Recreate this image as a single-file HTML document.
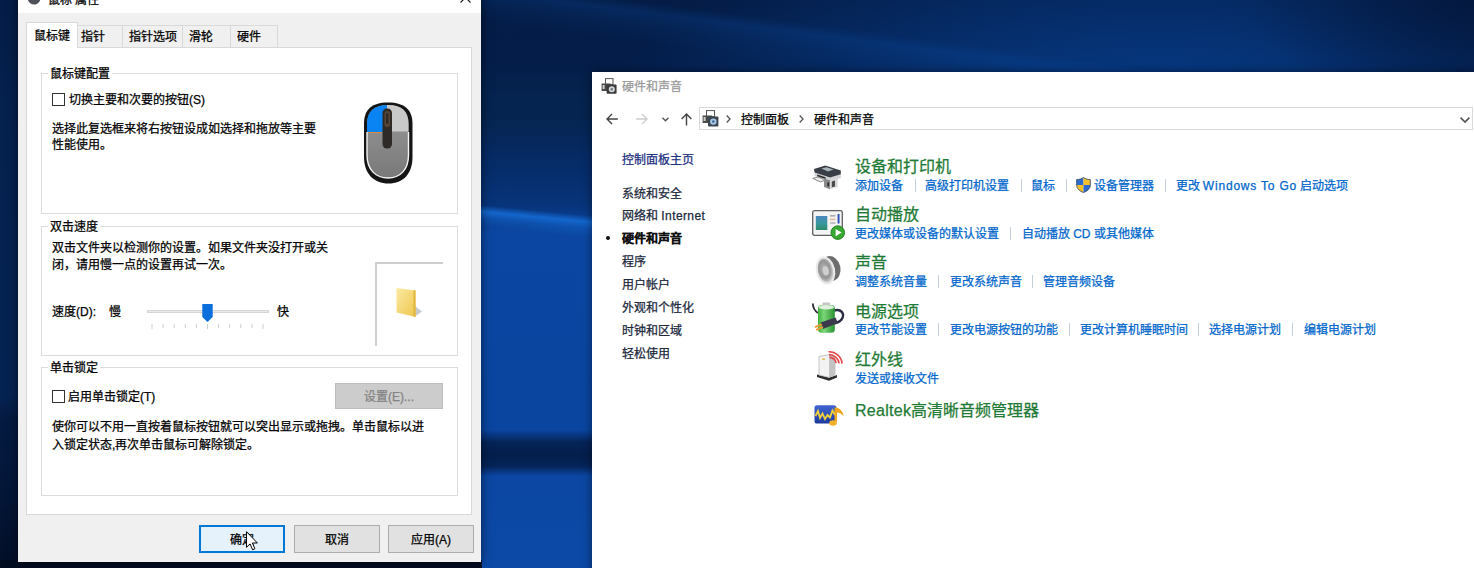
<!DOCTYPE html>
<html lang="zh-CN">
<head>
<meta charset="utf-8">
<title>鼠标 属性</title>
<style>
html,body{margin:0;padding:0;}
body{width:1474px;height:568px;overflow:hidden;position:relative;background:#062a66;
 font-family:"Liberation Sans",sans-serif;font-size:12px;line-height:16px;color:#000;}
.abs,.t{position:absolute;}
.t{white-space:nowrap;font-size:12px;line-height:16px;height:16px;margin-top:1px;text-align:justify;text-align-last:justify;}
.t,.bt{-webkit-text-stroke:0.25px;}
.bt{display:block;white-space:nowrap;font-size:12px;line-height:16px;text-align:center;}
svg{position:absolute;overflow:visible;}
#bg{left:0;top:0;width:1474px;height:568px;
 background:
  radial-gradient(ellipse 260px 130px at 1500px -10px, rgba(3,22,58,0.95), rgba(3,22,58,0) 100%),
  radial-gradient(ellipse 560px 210px at 1160px 120px, rgba(7,64,146,0.95), rgba(7,64,146,0) 100%),
  linear-gradient(180deg,#041c46 0px,#041e4a 72px,#05244f 100%);}
#beam{left:480px;top:-48px;width:760px;height:70px;transform-origin:0 0;transform:rotate(7.5deg);
 background:linear-gradient(180deg,rgba(10,70,150,0) 0%,rgba(10,70,150,0) 40%,rgba(10,70,150,0.30) 55%,rgba(10,70,150,0.12) 75%,rgba(10,70,150,0) 100%);}
#strip{left:478px;top:0;width:118px;height:568px;overflow:hidden;
 background:linear-gradient(180deg,rgba(5,34,79,0) 0px,rgba(5,34,79,0) 66px,#05244f 100px,#05244f 115px,#062b66 160px,#07347a 205px,#0b47a2 232px,#0a45a0 430px,#052458 442px,#041e4c 455px,#052458 466px,#0b47a3 476px,#0c49a6 568px);}
#sline{left:-10px;top:211px;width:150px;height:22px;transform:rotate(5.5deg);
 background:linear-gradient(180deg,rgba(20,104,208,0) 0%,rgba(20,104,208,0.95) 30%,rgba(16,92,190,0.6) 60%,rgba(12,74,168,0) 100%);}
#lstrip{left:0;top:0;width:20px;height:568px;
 background:linear-gradient(180deg,#041d48 0px,#05224f 150px,#052352 395px,#041a40 420px,#04183c 470px,#030f28 568px);}
#bstrip{left:0;top:560px;width:482px;height:8px;background:#020c20;}

/* dialog */
#dlg{left:18px;top:-20px;width:463px;height:582px;background:#f0f0f0;box-shadow:0 0 10px rgba(0,0,0,0.55);}
#dlgtitle{left:0;top:0;width:463px;height:33px;background:#fff;}
.tab{background:#f0f0f0;border:1px solid #d9d9d9;box-sizing:border-box;height:23px;top:45px;}
.tab.sel{background:#fff;top:42px;height:26px;border-bottom:none;z-index:3;}
#pane{left:8px;top:67px;width:446px;height:468px;background:#fff;border:1px solid #d9d9d9;box-sizing:border-box;}
.grp{border:1px solid #dcdcdc;box-sizing:border-box;left:23px;width:417px;}
.glab{background:#fff;padding:0 2px;}
.cb{width:13px;height:13px;box-sizing:border-box;border:1px solid #333;background:#fff;}
.btn{box-sizing:border-box;height:28px;top:545px;background:#e1e1e1;border:1px solid #adadad;}
.btn .bt{margin-top:6px;}

/* control panel window */
#cp{left:592px;top:72px;width:900px;height:520px;background:#fff;box-shadow:0 0 9px rgba(0,0,10,0.5);}
.lnk{color:#0066cc;}
.hd{font-size:16px;line-height:20px;height:20px;color:#1f7a35;}
.sep{width:1px;height:13px;background:#c3cfda;}
.sb{color:#20283c;}
</style>
</head>
<body>
<div id="bg" class="abs"></div>
<div id="beam" class="abs"></div>
<div id="strip" class="abs"><div id="sline" class="abs"></div></div>
<div id="lstrip" class="abs"></div>
<div id="bstrip" class="abs"></div>

<!-- ===== Mouse properties dialog ===== -->
<div id="dlg" class="abs">
 <div id="dlgtitle" class="abs"></div>
 <!-- title icon (mostly cut off) -->
 <svg style="left:9px;top:9.5px;" width="14" height="16" viewBox="0 0 14 16"><path d="M0.5 9 C0.5 3 5 1 9 2 C13.5 3 14.5 8 12.5 11.5 C10 16 2.5 16 0.5 9Z" fill="#4e5258"/><path d="M3 8 C3 5 6 3 9 4" stroke="#ddd" stroke-width="1" fill="none"/></svg>
 <div class="t" style="left:30px;top:11px;width:51.36px;">鼠标 属性</div>
 <!-- close X -->
 <svg style="left:442px;top:12px;" width="11" height="11" viewBox="0 0 11 11"><path d="M0.5 0.5 L10.5 10.5 M10.5 0.5 L0.5 10.5" stroke="#222" stroke-width="1.2" fill="none"/></svg>

 <div class="tab sel abs" style="left:8px;width:52px;"></div>
 <div class="tab abs" style="left:59px;width:46px;"></div>
 <div class="tab abs" style="left:104px;width:61px;"></div>
 <div class="tab abs" style="left:164px;width:49px;"></div>
 <div class="tab abs" style="left:212px;width:48px;"></div>
 <div id="pane" class="abs"></div>
 <div class="t" style="left:16px;top:47px;z-index:4;width:36.02px;">鼠标键</div>
 <div class="t" style="left:63px;top:48px;width:24.02px;">指针</div>
 <div class="t" style="left:111px;top:48px;width:48.02px;">指针选项</div>
 <div class="t" style="left:171px;top:48px;width:24.02px;">滑轮</div>
 <div class="t" style="left:219px;top:48px;width:24.02px;">硬件</div>

 <!-- group 1 -->
 <div class="grp abs" style="top:93px;height:141px;"></div>
 <div class="t glab" style="left:30px;top:85px;width:60.02px;">鼠标键配置</div>
 <div class="cb abs" style="left:34px;top:113px;"></div>
 <div class="t" style="left:51px;top:111px;width:136.02px;">切换主要和次要的按钮(S)</div>
 <div class="t" style="left:34px;top:140px;width:264.02px;">选择此复选框来将右按钮设成如选择和拖放等主要</div>
 <div class="t" style="left:34px;top:156px;width:60.02px;">性能使用。</div>
 <!-- mouse picture -->
 <svg style="left:345px;top:122px;" width="50" height="82" viewBox="0 0 50 82">
  <defs>
   <clipPath id="mb"><path d="M25 3 C11 3 4 9.5 4 22 L4 53 C4 68 13 76 25 76 C37 76 45.5 68 45.5 53 L45.5 22 C45.5 9.5 39 3 25 3Z"/></clipPath>
   <linearGradient id="mg" x1="0" y1="0" x2="0" y2="1"><stop offset="0" stop-color="#9a9a9a"/><stop offset="1" stop-color="#767676"/></linearGradient>
  </defs>
  <path d="M25 0.5 C8 0.5 1 8 1 22 L1 55 C1 72 11 81.5 25.5 81.5 C40 81.5 49.5 72 49.5 55 L49.5 22 C49.5 8 42 0.5 25 0.5Z" fill="#151515"/>
  <g clip-path="url(#mb)">
   <rect x="0" y="0" width="50" height="82" fill="url(#mg)"/>
   <rect x="0" y="0" width="24" height="30" fill="#0a84f2"/>
   <rect x="24" y="0" width="26" height="29.5" fill="#c9c9c9"/>
   <rect x="0" y="30" width="19" height="1" fill="#e08a3a"/>
  </g>
  <path d="M4 30 L4 53 C4 68 13 76 25 76 C37 76 45.5 68 45.5 53 L45.5 30" fill="none" stroke="#f4f4f4" stroke-width="1.4"/>
  <rect x="19.5" y="6.5" width="9.5" height="40" rx="4.5" fill="#2e2a28"/>
  <rect x="21.5" y="9" width="5.5" height="16" rx="2.7" fill="#5a4636"/>
  <rect x="23" y="11" width="2.5" height="11" rx="1.2" fill="#2e2a28"/>
 </svg>

 <!-- group 2 -->
 <div class="grp abs" style="top:246px;height:130px;"></div>
 <div class="t glab" style="left:30px;top:238px;width:48.02px;">双击速度</div>
 <div class="t" style="left:34px;top:259px;width:276.02px;">双击文件夹以检测你的设置。如果文件夹没打开或关</div>
 <div class="t" style="left:34px;top:276px;width:180.02px;">闭，请用慢一点的设置再试一次。</div>
 <div class="t" style="left:34px;top:323px;width:44.02px;">速度(D):</div>
 <div class="t" style="left:91px;top:323px;width:12.02px;">慢</div>
 <div class="t" style="left:259px;top:323px;width:12.02px;">快</div>
 <!-- slider -->
 <div class="abs" style="left:129px;top:330px;width:122px;height:3px;background:#e7eaea;border:1px solid #d6d6d6;box-sizing:border-box;"></div>
 <svg style="left:184px;top:324px;" width="11" height="18" viewBox="0 0 11 18"><path d="M0.3 0 L10.7 0 L10.7 13 L5.5 18 L0.3 13Z" fill="#0a6fdc"/></svg>
 <svg style="left:133px;top:344px;" width="114" height="5" viewBox="0 0 114 5"><path d="M1 0V5 M12.1 0V4 M23.2 0V4 M34.3 0V4 M45.4 0V4 M56.5 0V5 M67.6 0V4 M78.7 0V4 M89.8 0V4 M100.9 0V4 M112 0V5" stroke="#cdcdcd" stroke-width="1" fill="none"/></svg>
 <!-- folder test area -->
 <div class="abs" style="left:357px;top:282px;width:68px;height:84px;box-sizing:border-box;border-left:2px solid #cfcfcf;border-top:2px solid #cfcfcf;"></div>
 <svg style="left:378px;top:307px;" width="28" height="31" viewBox="0 0 28 31">
  <defs><linearGradient id="fg" x1="0" y1="0" x2="1" y2="1"><stop offset="0" stop-color="#fbeaa2"/><stop offset="1" stop-color="#eec64e"/></linearGradient></defs>
  <path d="M19 19 L26 24.5 L19 29.5Z" fill="#9aa0a6" opacity="0.55"/>
  <path d="M0.5 1 L19.5 3.5 L19.5 30 L0.5 25.5Z" fill="url(#fg)"/>
  <path d="M17.5 3.3 L19.5 3.5 L19.5 30 L17.5 29.6Z" fill="#e2b63c"/>
 </svg>

 <!-- group 3 -->
 <div class="grp abs" style="top:387px;height:129px;"></div>
 <div class="t glab" style="left:30px;top:379px;width:48.02px;">单击锁定</div>
 <div class="cb abs" style="left:34px;top:410px;"></div>
 <div class="t" style="left:50px;top:408px;width:87.35px;">启用单击锁定(T)</div>
 <div class="t" style="left:34px;top:438px;width:372.02px;">使你可以不用一直按着鼠标按钮就可以突出显示或拖拽。单击鼠标以进</div>
 <div class="t" style="left:34px;top:456px;width:207.36px;">入锁定状态,再次单击鼠标可解除锁定。</div>
 <div class="abs" style="left:317px;top:403px;width:108px;height:26px;box-sizing:border-box;background:#cccccc;border:1px solid #bfbfbf;"><span class="bt" style="margin-top:5px;color:#838383;">设置(E)...</span></div>

 <!-- buttons -->
 <div class="btn abs" style="left:181px;width:86px;background:#e5f1fb;border:2px solid #0078d7;"><span class="bt" style="margin-top:5px;">确定</span></div>
 <div class="btn abs" style="left:276px;width:86px;"><span class="bt">取消</span></div>
 <div class="btn abs" style="left:370px;width:86px;"><span class="bt">应用(A)</span></div>
</div>
<!-- mouse cursor -->
<svg style="left:246px;top:531px;z-index:20;" width="13" height="20" viewBox="0 0 13 20"><path d="M0.5 0.7 L0.5 16.3 L4.1 12.9 L6.6 18.8 L8.9 17.8 L6.4 12 L11.4 12Z" fill="#fff" stroke="#000" stroke-width="1"/></svg>

<!-- ===== Control panel window ===== -->
<div id="cp" class="abs">
 <!-- title icon -->
 <svg style="left:9px;top:6px;" width="16" height="16" viewBox="0 0 16 16">
  <rect x="4.5" y="0.6" width="7.5" height="6" fill="#fff" stroke="#555" stroke-width="1"/>
  <rect x="0.6" y="5.5" width="9" height="7.5" fill="#4a4a4a"/>
  <rect x="1.6" y="7" width="2" height="4" fill="#cfcfcf"/>
  <rect x="5.6" y="6.4" width="10" height="9.4" rx="1" fill="#3c3c3c"/>
  <circle cx="10.8" cy="11.3" r="3" fill="#cfd6dc"/><circle cx="10.8" cy="11.3" r="1.2" fill="#6a7278"/>
 </svg>
 <div class="t" style="left:30px;top:6px;color:#9a9a9a;width:60.02px;">硬件和声音</div>

 <!-- nav arrows -->
 <svg style="left:14px;top:41px;" width="12" height="12" viewBox="0 0 12 12"><path d="M11.8 6 H1 M6 1 L1 6 L6 11" stroke="#444" stroke-width="1.4" fill="none"/></svg>
 <svg style="left:44px;top:41px;" width="12" height="12" viewBox="0 0 12 12"><path d="M0.2 6 H11 M6 1 L11 6 L6 11" stroke="#cdcdcd" stroke-width="1.4" fill="none"/></svg>
 <svg style="left:70px;top:45px;" width="7" height="5" viewBox="0 0 7 5"><path d="M0.5 0.7 L3.5 3.7 L6.5 0.7" stroke="#555" stroke-width="1.4" fill="none"/></svg>
 <svg style="left:89px;top:40.5px;" width="11" height="13" viewBox="0 0 11 13"><path d="M5.5 12.5 V1 M0.6 6 L5.5 1 L10.4 6" stroke="#444" stroke-width="1.4" fill="none"/></svg>

 <!-- address bar -->
 <div class="abs" style="left:107px;top:35px;width:774px;height:23px;box-sizing:border-box;border:1px solid #d9d9d9;"></div>
 <svg style="left:110px;top:37.5px;" width="17" height="17" viewBox="0 0 17 17">
  <rect x="4.5" y="0.6" width="8" height="6" fill="#fff" stroke="#555" stroke-width="1"/>
  <rect x="0.6" y="5.5" width="9.5" height="7.5" fill="#4a4a4a"/>
  <rect x="1.6" y="7" width="2" height="4" fill="#cfcfcf"/>
  <rect x="6" y="6.6" width="10.4" height="9.8" rx="1" fill="#3c4650"/>
  <circle cx="11.3" cy="11.6" r="3.2" fill="#a8c8e8"/><circle cx="11.3" cy="11.6" r="1.3" fill="#3a6a9a"/>
 </svg>
 <svg style="left:134px;top:42.6px;" width="5" height="8" viewBox="0 0 5 8"><path d="M0.7 0.5 L4 4 L0.7 7.5" stroke="#555" stroke-width="1.3" fill="none"/></svg>
 <div class="t" style="left:149px;top:39px;width:48.02px;">控制面板</div>
 <svg style="left:206.5px;top:42.6px;" width="5" height="8" viewBox="0 0 5 8"><path d="M0.7 0.5 L4 4 L0.7 7.5" stroke="#555" stroke-width="1.3" fill="none"/></svg>
 <div class="t" style="left:222px;top:39px;width:60.02px;">硬件和声音</div>
 <svg style="left:868.3px;top:44.5px;" width="10" height="6" viewBox="0 0 10 6"><path d="M0.6 0.6 L5 5 L9.4 0.6" stroke="#555" stroke-width="1.6" fill="none"/></svg>

 <!-- sidebar -->
 <div class="t sb" style="color:#1d2f80;left:30px;top:79px;width:72.02px;">控制面板主页</div>
 <div class="t sb" style="left:30px;top:113px;width:60.02px;">系统和安全</div>
 <div class="t sb" style="left:30px;top:135px;width:83.27px;">网络和 <span style="letter-spacing:0.4px;">Internet</span></div>
 <div class="abs" style="left:14px;top:164px;width:4px;height:4px;border-radius:2px;background:#111;"></div>
 <div class="t sb" style="left:30px;top:158px;font-weight:bold;color:#111;width:60.02px;">硬件和声音</div>
 <div class="t sb" style="left:30px;top:181px;width:24.02px;">程序</div>
 <div class="t sb" style="left:30px;top:204px;width:48.02px;">用户帐户</div>
 <div class="t sb" style="left:30px;top:227px;width:72.02px;">外观和个性化</div>
 <div class="t sb" style="left:30px;top:250px;width:60.02px;">时钟和区域</div>
 <div class="t sb" style="left:30px;top:273px;width:48.02px;">轻松使用</div>

 <!-- devices and printers -->
 <svg style="left:221px;top:93px;" width="29" height="25" viewBox="0 0 29 25">
  <path d="M1.7 7.4 L17 12.4 L27.8 9 L27.8 13 L17 16.6 L1.7 11Z" fill="#d2d4d6"/>
  <path d="M1 3.9 L12.4 0.6 L27.8 5.6 L27.8 9.2 L17 12.6 L1.5 7.6Z" fill="#3a3e46"/>
  <path d="M8.4 3.6 L13.5 2.2 L20.5 4.6 L15 6.4Z" fill="#aab4ba"/>
  <path d="M4.2 9.6 L12.6 12.2 L12.6 14 L4.2 11.2Z" fill="#2c2c2c"/>
  <path d="M-0.3 13.4 L5 12 L12.6 15 L7.4 16.9Z" fill="#ececec" stroke="#707070" stroke-width="0.8"/>
  <path d="M11 13.5 L17 15.2 L17 24.2 L11 22Z" fill="#8c8c8c"/>
  <path d="M17 15.2 L24.6 13.2 L24.6 22 L17 24.2Z" fill="#d6d6d6"/>
  <rect x="14.3" y="17.4" width="1.8" height="4" fill="#2e2e2e"/>
  <path d="M18.8 16.4 L22 15.6 L22 21.4 L18.8 22.3Z" fill="#4a4a4a"/>
 </svg>
 <div class="t hd" style="left:263px;top:84px;width:96.02px;">设备和打印机</div>
 <div class="t lnk" style="left:263px;top:105px;width:48.02px;">添加设备</div>
 <div class="sep abs" style="left:322.5px;top:107px;"></div>
 <div class="t lnk" style="left:333px;top:105px;width:84.02px;">高级打印机设置</div>
 <div class="sep abs" style="left:428.8px;top:107px;"></div>
 <div class="t lnk" style="left:439.4px;top:105px;width:24.02px;">鼠标</div>
 <div class="sep abs" style="left:473.8px;top:107px;"></div>
 <svg style="left:483.5px;top:105px;" width="15" height="16" viewBox="0 0 15 16">
  <defs><clipPath id="sh"><path d="M7.5 0.5 C5.5 2 3 2.6 0.7 2.6 L0.7 8 C0.7 11.8 4 14.3 7.5 15.5 C11 14.3 14.3 11.8 14.3 8 L14.3 2.6 C12 2.6 9.5 2 7.5 0.5Z"/></clipPath></defs>
  <g clip-path="url(#sh)"><rect x="0" y="0" width="7.5" height="8" fill="#2d6bd0"/><rect x="7.5" y="0" width="7.5" height="8" fill="#f6c12a"/><rect x="0" y="8" width="7.5" height="8" fill="#f6c12a"/><rect x="7.5" y="8" width="7.5" height="8" fill="#2d6bd0"/></g>
  <path d="M7.5 0.5 C5.5 2 3 2.6 0.7 2.6 L0.7 8 C0.7 11.8 4 14.3 7.5 15.5 C11 14.3 14.3 11.8 14.3 8 L14.3 2.6 C12 2.6 9.5 2 7.5 0.5Z" fill="none" stroke="#3a4a6a" stroke-width="0.9"/>
 </svg>
 <div class="t lnk" style="left:501.7px;top:105px;width:60.02px;">设备管理器</div>
 <div class="sep abs" style="left:572.5px;top:107px;"></div>
 <div class="t lnk" style="left:583.5px;top:105px;width:172.93px;">更改 <span style="letter-spacing:0.8px;">Windows To Go</span> 启动选项</div>

 <!-- autoplay -->
 <svg style="left:219.5px;top:137.5px;" width="33" height="30" viewBox="0 0 33 30">
  <defs><linearGradient id="ap" x1="0" y1="0" x2="0" y2="1"><stop offset="0" stop-color="#4a86c0"/><stop offset="0.5" stop-color="#3a98a0"/><stop offset="1" stop-color="#2f8a68"/></linearGradient></defs>
  <rect x="0.7" y="0.7" width="29.6" height="24.6" rx="1.8" fill="#f4f4f4" stroke="#606060" stroke-width="1.3"/>
  <rect x="3.8" y="6" width="11.5" height="14" fill="url(#ap)"/>
  <rect x="18" y="5" width="5.5" height="1.6" fill="#a9a9a9"/><rect x="18" y="8.6" width="5.5" height="1.6" fill="#dcb896"/><rect x="18" y="12.2" width="5.5" height="1.6" fill="#b9b9b9"/>
  <rect x="25.6" y="4" width="1.9" height="9.5" fill="#2a4fb4"/>
  <circle cx="25.8" cy="22.6" r="6.8" fill="#38a832" stroke="#2a8626" stroke-width="1"/>
  <path d="M23.6 19 L29.6 22.6 L23.6 26.2Z" fill="#fff"/>
 </svg>
 <div class="t hd" style="left:263px;top:132px;width:64.02px;">自动播放</div>
 <div class="t lnk" style="left:263px;top:153px;width:144.02px;">更改媒体或设备的默认设置</div>
 <div class="sep abs" style="left:418px;top:155px;"></div>
 <div class="t lnk" style="left:429.8px;top:153px;width:132.02px;">自动播放 CD 或其他媒体</div>

 <!-- sound -->
 <svg style="left:222.5px;top:183px;" width="26" height="31" viewBox="0 0 26 31">
  <defs><radialGradient id="sp" cx="0.45" cy="0.45" r="0.6"><stop offset="0" stop-color="#bdbdbd"/><stop offset="0.6" stop-color="#949494"/><stop offset="1" stop-color="#dcdcdc"/></radialGradient></defs>
  <ellipse cx="15.5" cy="13.5" rx="10" ry="12.5" fill="#6e6e6e" transform="rotate(-12 15.5 13.5)"/>
  <ellipse cx="10.5" cy="15.5" rx="9.6" ry="14.2" fill="#e9e9e9" transform="rotate(-12 10.5 15.5)"/>
  <ellipse cx="10.5" cy="15.5" rx="7.6" ry="12" fill="url(#sp)" transform="rotate(-12 10.5 15.5)"/>
  <ellipse cx="10.8" cy="15.8" rx="3" ry="4.6" fill="#cfcfcf" transform="rotate(-12 10.8 15.8)"/>
 </svg>
 <div class="t hd" style="left:263px;top:180px;width:32.02px;">声音</div>
 <div class="t lnk" style="left:263px;top:201px;width:72.02px;">调整系统音量</div>
 <div class="sep abs" style="left:346.4px;top:203px;"></div>
 <div class="t lnk" style="left:357.6px;top:201px;width:72.02px;">更改系统声音</div>
 <div class="sep abs" style="left:440.4px;top:203px;"></div>
 <div class="t lnk" style="left:451.4px;top:201px;width:72.02px;">管理音频设备</div>

 <!-- power -->
 <svg style="left:219.5px;top:230px;" width="33" height="33" viewBox="0 0 33 33">
  <defs><linearGradient id="bat" x1="0" y1="0" x2="1" y2="0"><stop offset="0" stop-color="#3fae3e"/><stop offset="0.35" stop-color="#7bd678"/><stop offset="1" stop-color="#2a9230"/></linearGradient></defs>
  <path d="M0.8 1.5 C1 6 3 9 6 11" stroke="#2e2e3a" stroke-width="1.8" fill="none"/>
  <path d="M21 9 C29 5.5 33.5 12 29.5 17.5 C27 21 22 21.5 18 22.5" stroke="#2b2b44" stroke-width="2.4" fill="none"/>
  <rect x="10.5" y="0.6" width="7.5" height="3.5" rx="1" fill="#c4c4c4"/>
  <rect x="6" y="3" width="16.8" height="27.8" rx="3.5" fill="url(#bat)"/>
  <ellipse cx="14.4" cy="5.2" rx="7.6" ry="2.3" fill="#dff0de"/>
  <path d="M8.5 20.5 L23.5 15.5 L26 21 L11 27Z" fill="#3a3a4c"/>
  <path d="M3 25.2 L10 22.4 M4.2 27.8 L11 25" stroke="#ee962e" stroke-width="1.8" fill="none"/>
 </svg>
 <div class="t hd" style="left:263px;top:229px;width:64.02px;">电源选项</div>
 <div class="t lnk" style="left:263px;top:249px;width:72.02px;">更改节能设置</div>
 <div class="sep abs" style="left:346.4px;top:251px;"></div>
 <div class="t lnk" style="left:357.6px;top:249px;width:108.02px;">更改电源按钮的功能</div>
 <div class="sep abs" style="left:476.8px;top:251px;"></div>
 <div class="t lnk" style="left:488px;top:249px;width:108.02px;">更改计算机睡眠时间</div>
 <div class="sep abs" style="left:606.3px;top:251px;"></div>
 <div class="t lnk" style="left:616.9px;top:249px;width:72.02px;">选择电源计划</div>
 <div class="sep abs" style="left:700.3px;top:251px;"></div>
 <div class="t lnk" style="left:711.5px;top:249px;width:72.02px;">编辑电源计划</div>

 <!-- infrared -->
 <svg style="left:224.5px;top:278px;" width="29" height="32" viewBox="0 0 29 32">
  <path d="M0 24.5 L12 27.5 L20 25 L20 27.5 L12 30.8 L0 27Z" fill="#2c2c2c"/>
  <path d="M2 6.5 L12.5 4.5 L12.5 27.5 L2 25Z" fill="#f3f3f3" stroke="#b9b9b9" stroke-width="0.8"/>
  <path d="M12.5 4.5 L18.5 6.5 L18.5 25.5 L12.5 27.5Z" fill="#c4c4c4"/>
  <rect x="5" y="8.5" width="3" height="1.6" fill="#e2c04a"/>
  <g fill="none" stroke="#e24848" stroke-width="1.6" transform="translate(0.5 2.2)">
   <path d="M12 5.2 A 7 7 0 0 1 18.6 11"/>
   <path d="M11.5 2.4 A 10 10 0 0 1 21.6 11.2"/>
   <path d="M11 -0.4 A 13 13 0 0 1 24.6 11.4"/>
  </g>
 </svg>
 <div class="t hd" style="left:263px;top:277px;width:48.02px;">红外线</div>
 <div class="t lnk" style="left:263px;top:298px;width:84.02px;">发送或接收文件</div>

 <!-- realtek -->
 <svg style="left:221.5px;top:332px;" width="31" height="23" viewBox="0 0 31 23">
  <defs><linearGradient id="rt" x1="0" y1="0" x2="0" y2="1"><stop offset="0" stop-color="#3f63d0"/><stop offset="1" stop-color="#1c3a9e"/></linearGradient></defs>
  <rect x="0.5" y="1.2" width="22" height="18.4" rx="2.6" fill="url(#rt)"/>
  <path d="M1.5 12 L4 7 L6 14 L8.5 9.5 L11 15 L13.5 11 L16 13.5 L18.5 6.5 L21 11" stroke="#f2d23a" stroke-width="1.8" fill="none"/>
  <path d="M20.5 3.5 C24.5 3 29.5 6.5 29.5 12.5 C27.8 9.5 25.5 8.5 23 8.8 L23 18 L20.5 18Z" fill="#f0a61e"/>
  <ellipse cx="19" cy="19" rx="3.8" ry="2.8" fill="#f2b228"/>
 </svg>
 <div class="t hd" style="left:263px;top:328px;width:184.38px;"><span style="letter-spacing:0.3px;">Realtek</span>高清晰音频管理器</div>
</div>
</body>
</html>
